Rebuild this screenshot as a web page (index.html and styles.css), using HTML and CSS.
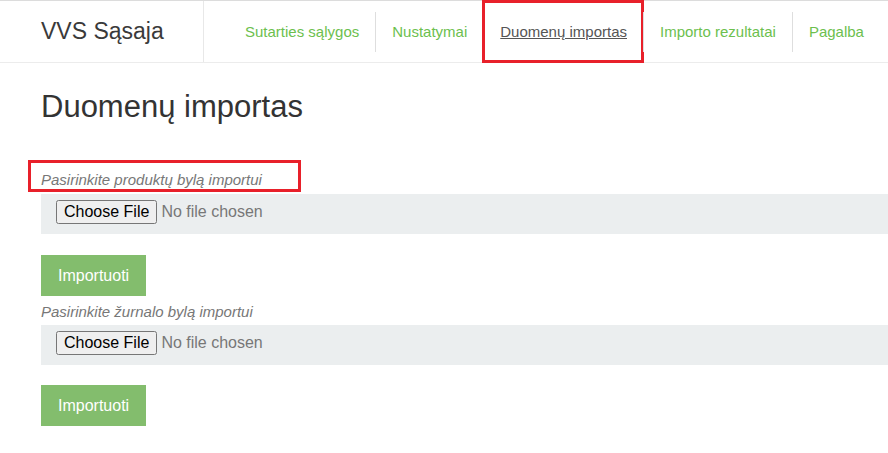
FILE: index.html
```html
<!DOCTYPE html>
<html lang="lt">
<head>
<meta charset="utf-8">
<title>Duomenų importas</title>
<link rel="stylesheet" href="styles.css">
</head>
<body>
<header class="navbar">
  <div class="brand">VVS Sąsaja</div>
  <ul class="nav">
    <li class="nav-item first"><a href="#">Sutarties sąlygos</a></li>
    <li class="nav-item"><a href="#">Nustatymai</a></li>
    <li class="nav-item active"><a href="#">Duomenų importas</a></li>
    <li class="nav-item"><a href="#">Importo rezultatai</a></li>
    <li class="nav-item"><a href="#">Pagalba</a></li>
  </ul>
</header>
<main class="content">
  <h1 class="title">Duomenų importas</h1>
  <form class="import-form">
    <label class="file-label marked">Pasirinkite produktų bylą importui</label>
    <div class="file-box"><input type="file" class="file-input"></div>
    <button type="button" class="btn-import first-btn">Importuoti</button>
  </form>
  <form class="import-form">
    <label class="file-label second">Pasirinkite žurnalo bylą importui</label>
    <div class="file-box"><input type="file" class="file-input"></div>
    <button type="button" class="btn-import">Importuoti</button>
  </form>
</main>
</body>
</html>
```
FILE: styles.css
```css
html, body {
  margin: 0;
  padding: 0;
  background: #fff;
  font-family: "Liberation Sans", Arial, sans-serif;
  color: #333;
}

.navbar {
  display: flex;
  height: 63px;
  box-sizing: border-box;
  border-top: 1px solid #dcdcdc;
  border-bottom: 1px solid #ececec;
}

.brand {
  width: 204px;
  box-sizing: border-box;
  padding-left: 41px;
  display: flex;
  align-items: center;
  font-size: 23px;
  color: #3a3a3a;
  border-right: 1px solid #e8e8e8;
  padding-bottom: 1px;
}

.nav {
  list-style: none;
  margin: 0;
  padding: 0 0 0 25px;
  display: flex;
}

.nav-item {
  display: flex;
  align-items: center;
  padding: 0 16px 1px 17px;
  background: linear-gradient(#dedede, #dedede) no-repeat left center / 1px 40px;
}

.nav-item.first {
  background: none;
  padding-left: 16px;
}

.nav-item a {
  font-size: 15px;
  color: #6cc04e;
  text-decoration: none;
}

.nav-item.active {
  outline: 3px solid #e8202a;
  outline-offset: -2px;
}

.nav-item.active a {
  color: #555;
  text-decoration: underline;
}

.content {
  padding: 0 0 0 41px;
}

.title {
  margin: 27px 0 0;
  font-size: 31px;
  font-weight: normal;
  line-height: 34px;
  color: #333;
}

.import-form {
  display: flex;
  flex-direction: column;
  align-items: flex-start;
}

.file-label {
  display: block;
  font-size: 15px;
  line-height: 20px;
  font-style: italic;
  color: #777;
  position: relative;
}

.file-label.marked {
  margin-top: 46px;
}

.file-label.marked::after {
  content: "";
  position: absolute;
  left: -13px;
  top: -10px;
  width: 273px;
  height: 32px;
  box-sizing: border-box;
  border: 3px solid #e8202a;
}

.file-label.second {
  margin-top: 6px;
}

.file-box {
  align-self: stretch;
  height: 40px;
  box-sizing: border-box;
  margin-top: 4px;
  padding: 6px 15px;
  background: #ebeeef;
  display: flex;
  align-items: flex-start;
}

.file-label.second + .file-box {
  margin-top: 3px;
}

.file-input {
  font-family: "Liberation Sans", Arial, sans-serif;
  font-size: 16px;
  color: #777;
  margin: 0;
}

.btn-import {
  margin-top: 21px;
  height: 41px;
  padding: 0 17px;
  border: none;
  border-radius: 0;
  background: #83bd6d;
  color: #fff;
  font-family: "Liberation Sans", Arial, sans-serif;
  font-size: 16px;
}

.import-form + .import-form .btn-import {
  margin-top: 20px;
}
```
